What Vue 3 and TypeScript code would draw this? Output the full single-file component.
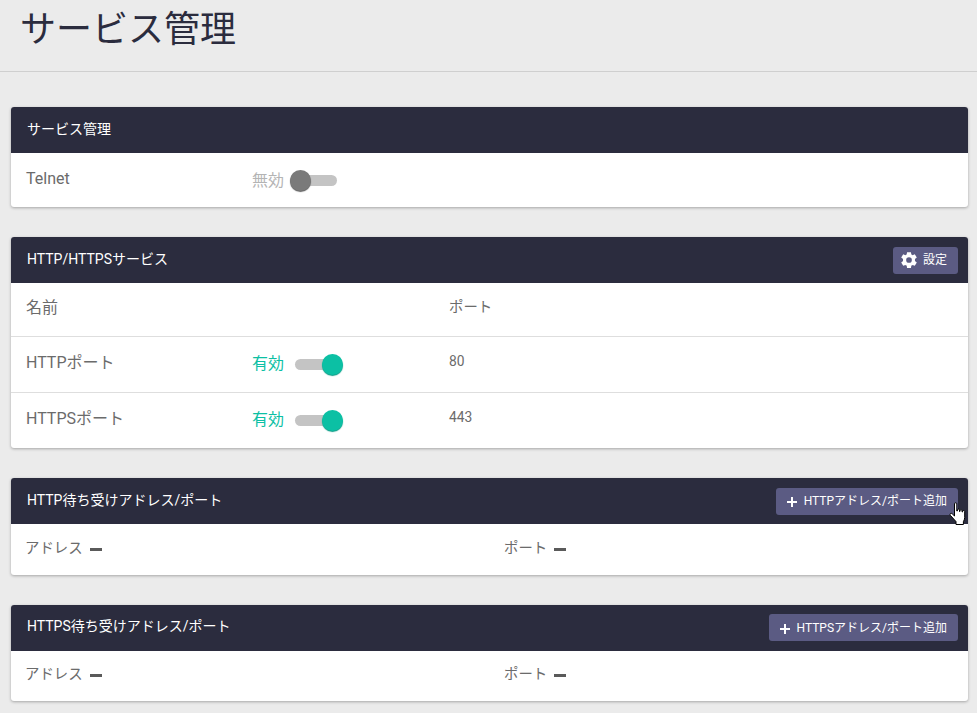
<script setup lang="ts">
interface PortRow { name: string; port: string }
const rows: PortRow[] = [
  { name: 'HTTPポート', port: '80' },
  { name: 'HTTPSポート', port: '443' },
]
const listeners = [
  { title: 'HTTP待ち受けアドレス/ポート', action: 'HTTPアドレス/ポート追加', cursor: true },
  { title: 'HTTPS待ち受けアドレス/ポート', action: 'HTTPSアドレス/ポート追加', cursor: false },
]
</script>

<template>
  <div class="page">
    <header class="page-head"><h1>サービス管理</h1></header>
    <main class="content">
      <section class="card">
        <div class="card-head"><h2>サービス管理</h2></div>
        <div class="row telnet">
          <span class="name">Telnet</span>
          <span class="state off">無効</span>
          <span class="switch is-off"><i></i></span>
        </div>
      </section>

      <section class="card">
        <div class="card-head">
          <h2>HTTP/HTTPSサービス</h2>
          <button class="btn">
            <svg class="gear" viewBox="0 0 24 24" width="18" height="18">
              <path fill="#fff" fill-rule="evenodd" d="M14.6 1.5l.5 3.1c.6.2 1.200.5 1.700.9l2.900-1.200 2.700 4.500-2.500 2c.1.400.1.700.1 1.200s0 .8-.1 1.200l2.500 2-2.700 4.500-2.900-1.200c-.5.4-1.100.7-1.700.9l-.5 3.100H9.400l-.5-3.100c-.6-.2-1.200-.5-1.700-.9l-2.900 1.200-2.700-4.500 2.500-2c-.1-.4-.1-.7-.1-1.200s0-.8.1-1.200l-2.500-2 2.700-4.500 2.900 1.200c.5-.4 1.100-.7 1.700-.9l.5-3.100zM12 8.200a3.800 3.800 0 1 0 0 7.600 3.800 3.800 0 0 0 0-7.600z"/>
            </svg>
            <span class="label">設定</span>
          </button>
        </div>
        <div class="row table-head">
          <span class="name">名前</span>
          <span class="port head-port">ポート</span>
        </div>
        <div v-for="r in rows" :key="r.name" class="row port-row">
          <span class="name">{{ r.name }}</span>
          <span class="state on">有効</span>
          <span class="switch is-on"><i></i></span>
          <span class="port">{{ r.port }}</span>
        </div>
      </section>

      <section v-for="l in listeners" :key="l.title" class="card">
        <div class="card-head">
          <h2>{{ l.title }}</h2>
          <button class="btn">
            <svg class="plus" viewBox="0 0 12 12" width="12" height="12">
              <path d="M6 1v10M1 6h10" stroke="#fff" stroke-width="2" fill="none"/>
            </svg>
            <span class="label">{{ l.action }}</span>
          </button>
          <svg v-if="l.cursor" class="cursor" viewBox="0 0 18 24" width="18" height="24">
            <path fill="#fff" stroke="#000" stroke-width="1" stroke-linejoin="round" d="M5.500 1.800c0-1.400 2.300-1.400 2.300 0v7.200h.6V8c0-1.200 2.100-1.200 2.100 0v1.500h.5V8.700c0-1.200 2.100-1.200 2.100 0v1.300h.5v-.6c0-1.200 2.100-1.200 2.100 0v6.100c0 1.800-.7 3-1.300 4.100v2.900H7v-2.900L1.300 13.300c-1-1.500.7-2.700 1.900-1.500l2.300 2.200z"/>
          </svg>
        </div>
        <div class="row listen">
          <div class="pair addr"><span>アドレス</span><b class="dash"></b></div>
          <div class="pair"><span>ポート</span><b class="dash"></b></div>
        </div>
      </section>
    </main>
  </div>
</template>

<style>
html, body { margin: 0; background: #ebebeb; }
</style>

<style scoped>
.page {
  width: 977px;
  height: 713px;
  overflow: hidden;
  background: #ebebeb;
  font-family: Roboto, "Noto Sans CJK JP", sans-serif;
  color: #6b6b6b;
}
.page-head {
  height: 71px;
  border-bottom: 1px solid #cfcfcf;
  padding-left: 20px;
}
h1 {
  margin: 0;
  font-size: 36px;
  font-weight: 400;
  line-height: 60px;
  color: #2b2c3e;
}
.content {
  padding: 35px 9px 0 11px;
  display: flex;
  flex-direction: column;
  gap: 30px;
}
.card {
  background: #fff;
  border-radius: 3px;
  box-shadow: 0 1px 3px rgba(0, 0, 0, 0.3);
}
.card-head {
  position: relative;
  height: 46px;
  background: #2b2c3e;
  border-radius: 3px 3px 0 0;
  display: flex;
  align-items: center;
  justify-content: space-between;
  padding: 0 10px 0 16px;
}
h2 {
  margin: 0;
  padding-bottom: 5px;
  font-size: 14px;
  font-weight: 400;
  color: #fff;
}
.btn {
  height: 27px;
  border: 0;
  border-radius: 3px;
  background: #5b5b83;
  color: #fff;
  font: inherit;
  font-size: 12px;
  padding: 0 11px 0 7px;
  display: flex;
  align-items: center;
  gap: 5px;
}
.label { padding-bottom: 3px; }
.plus { margin: 2px 1px 0 3px; }
.cursor {
  position: absolute;
  right: 1px;
  top: 24px;
}
.row {
  display: flex;
  align-items: center;
  padding-left: 15px;
  font-size: 16px;
}
.row + .row { border-top: 1px solid #dedede; }
.telnet { height: 54px; }
.table-head { height: 53px; }
.port-row { height: 55px; }
.name { width: 226px; padding-bottom: 8px; }
.telnet .name { padding-bottom: 4px; }
.state { width: 43px; padding-bottom: 5px; }
.telnet .state { width: 38px; padding-bottom: 3px; }
.on { color: #0cc0a4; }
.off { color: #b4b4b4; }
.port { font-size: 13.8px; margin-left: 116px; padding-bottom: 8px; }
.head-port { margin-left: 197px; font-size: 14.4px; padding-bottom: 9px; }
.switch {
  position: relative;
  width: 38px;
  height: 11px;
  border-radius: 6px;
  background: #c4c4c4;
  flex: none;
}
.telnet .switch { width: 47px; }
.switch i {
  position: absolute;
  top: -5px;
  width: 21px;
  height: 21px;
  border-radius: 50%;
}
.is-off i { left: 0; background: #7a7a7a; box-shadow: 0 1px 1px #5f5f5f; }
.is-on i { right: -10px; background: #0cc0a4; box-shadow: 0 1px 1px #0a9a84; }
.listen { height: 50.5px; padding-left: 14px; }
.pair { display: flex; align-items: center; gap: 7px; font-size: 14.4px; }
.pair span { padding-bottom: 6px; }
.addr { width: 479px; }
.dash { width: 12px; height: 3px; background: #5a5a5a; }
</style>
